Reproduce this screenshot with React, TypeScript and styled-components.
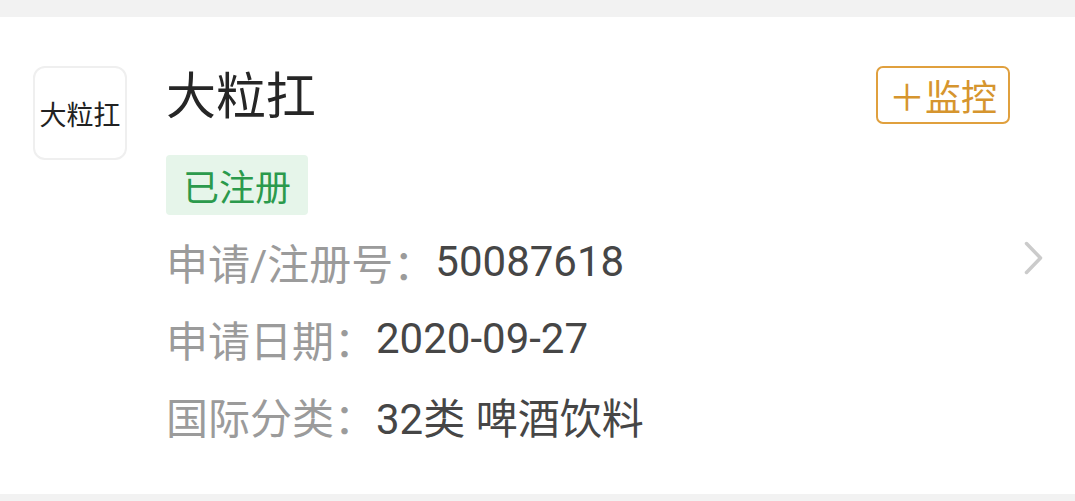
import React from "react";
import styled, { createGlobalStyle } from "styled-components";

const Global = createGlobalStyle`
  html, body {
    margin: 0;
    padding: 0;
    background: #f2f2f2;
  }
  body {
    font-family: Roboto, "Noto Sans CJK SC", sans-serif;
  }
`;

const Page = styled.div`
  width: 1075px;
  height: 501px;
  padding-top: 17px;
  box-sizing: border-box;
  background: #f2f2f2;
`;

const Card = styled.div`
  height: 477px;
  box-sizing: border-box;
  background: #ffffff;
  display: flex;
  align-items: flex-start;
  padding: 49px 32px 0 33px;
`;

const Logo = styled.div`
  flex: none;
  width: 94px;
  height: 94px;
  box-sizing: border-box;
  border: 2px solid #efefef;
  border-radius: 12px;
  display: flex;
  align-items: center;
  justify-content: center;
  font-family: "Noto Sans CJK SC", sans-serif;
  font-size: 27px;
  color: #222;
`;

const Body = styled.div`
  flex: 1;
  margin-left: 39px;
  display: flex;
  flex-direction: column;
  align-items: flex-start;
`;

const Header = styled.div`
  align-self: stretch;
  display: flex;
  justify-content: space-between;
  align-items: flex-start;
`;

const Title = styled.div`
  font-family: "Noto Sans CJK SC", sans-serif;
  font-size: 50px;
  line-height: 52px;
  color: #262626;
`;

const MonitorButton = styled.button`
  width: 134px;
  height: 58px;
  box-sizing: border-box;
  border: 2.5px solid #e0a03e;
  border-radius: 7px;
  background: #fff;
  color: #d6952e;
  font-family: "Noto Sans CJK SC", sans-serif;
  font-size: 36px;
  line-height: 1;
  padding: 0;
  display: flex;
  align-items: center;
  justify-content: center;
`;

const StatusTag = styled.div`
  margin-top: 31px;
  width: 142px;
  height: 60px;
  border-radius: 4px;
  background: #e6f5ea;
  color: #2b9a4c;
  font-family: "Noto Sans CJK SC", sans-serif;
  font-size: 36px;
  display: flex;
  align-items: center;
  justify-content: center;
`;

const InfoList = styled.div`
  margin-top: 8px;
  display: flex;
  flex-direction: column;
`;

const InfoRow = styled.div`
  height: 77px;
  display: flex;
  align-items: center;
  font-size: 42px;
  white-space: nowrap;
`;

const Label = styled.span`
  color: #9b9b9b;
`;

const Value = styled.span`
  color: #464646;
`;

const Chevron = styled.svg`
  flex: none;
  align-self: center;
  margin-left: 14px;
  margin-bottom: 44px;
  width: 19px;
  height: 34px;
`;

const rows: { label: string; value: string }[] = [
  { label: "申请/注册号：", value: "50087618" },
  { label: "申请日期：", value: "2020-09-27" },
  { label: "国际分类：", value: "32类 啤酒饮料" },
];

export default function App() {
  return (
    <>
      <Global />
      <Page>
        <Card>
          <Logo>大粒扛</Logo>
          <Body>
            <Header>
              <Title>大粒扛</Title>
              <MonitorButton>＋监控</MonitorButton>
            </Header>
            <StatusTag>已注册</StatusTag>
            <InfoList>
              {rows.map((r) => (
                <InfoRow key={r.label}>
                  <Label>{r.label}</Label>
                  <Value>{r.value}</Value>
                </InfoRow>
              ))}
            </InfoList>
          </Body>
          <Chevron viewBox="0 0 19 34" fill="none">
            <path
              d="M2.5 2.5 L16.5 17 L2.5 31.5"
              stroke="#cbcbcb"
              strokeWidth="3.5"
              strokeLinecap="round"
              strokeLinejoin="round"
            />
          </Chevron>
        </Card>
      </Page>
    </>
  );
}
